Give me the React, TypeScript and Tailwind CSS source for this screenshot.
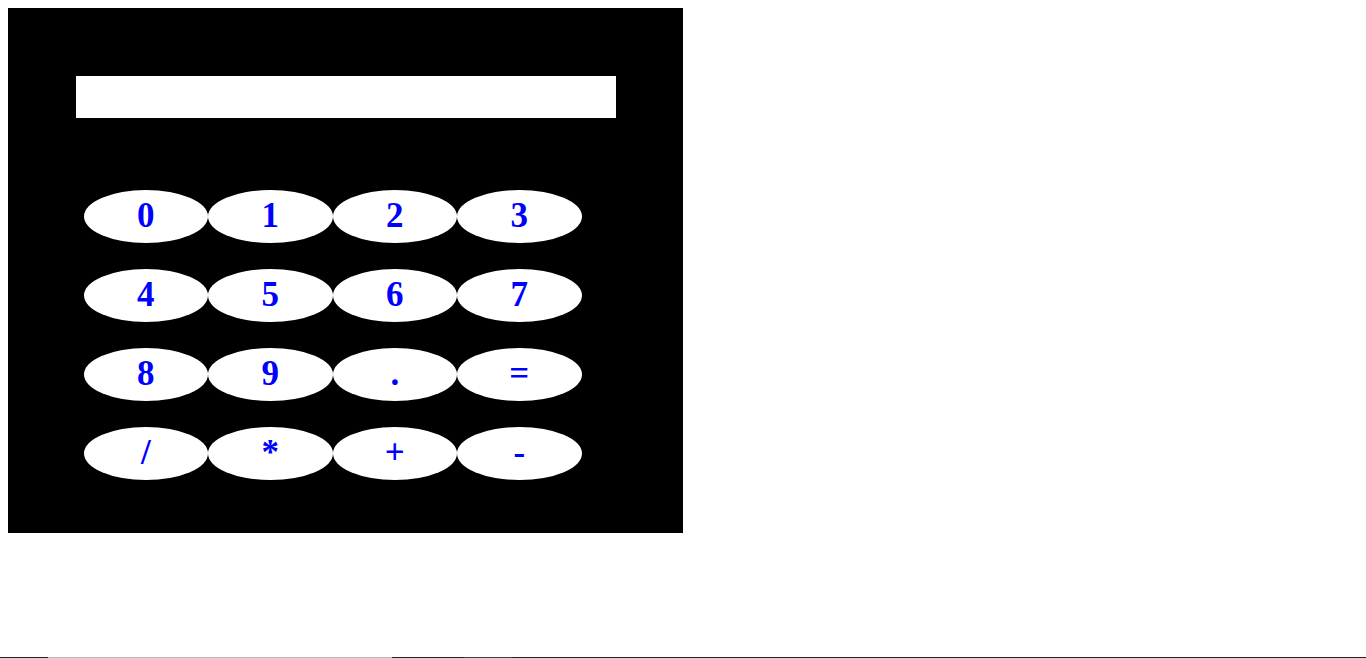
import React from 'react'

const keys = [
    ['0', '1', '2', '3'],
    ['4', '5', '6', '7'],
    ['8', '9', '.', '='],
    ['/', '*', '+', '-'],
]

export default function App() {
    return (
        <div className="w-full min-h-[658px] bg-white flex flex-col" style={{ fontFamily: '"Liberation Serif", "Times New Roman", serif' }}>
            <div className="p-2">
                {/* calculator */}
                <div className="w-[675px] h-[525px] bg-black pt-[68px] pl-[68px]">
                    <input type="text" className="block w-[540px] h-[42px] bg-white border-0 outline-none" />

                    <div className="mt-[72px] ml-[7.5px] flex flex-col gap-[26px]">
                        {keys.map((row, i) => (
                            <div key={i} className="flex">
                                {row.map((k) => (
                                    <button
                                        key={k}
                                        className="w-[124.5px] h-[53px] pb-[3px] rounded-[50%] bg-white text-[#0000ff] text-[35px] font-bold leading-none flex items-center justify-center"
                                    >
                                        {k}
                                    </button>
                                ))}
                            </div>
                        ))}
                    </div>
                </div>
            </div>

            {/* top edge of the next block, just below the fold */}
            <div className="mt-auto h-px flex">
                <div className="w-[48px] bg-[#222]" />
                <div className="w-[344px] bg-[#bbb]" />
                <div className="w-[72px] bg-[#222]" />
                <div className="w-[48px] bg-[#444]" />
                <div className="flex-1 bg-[#222]" />
            </div>
        </div>
    )
}
